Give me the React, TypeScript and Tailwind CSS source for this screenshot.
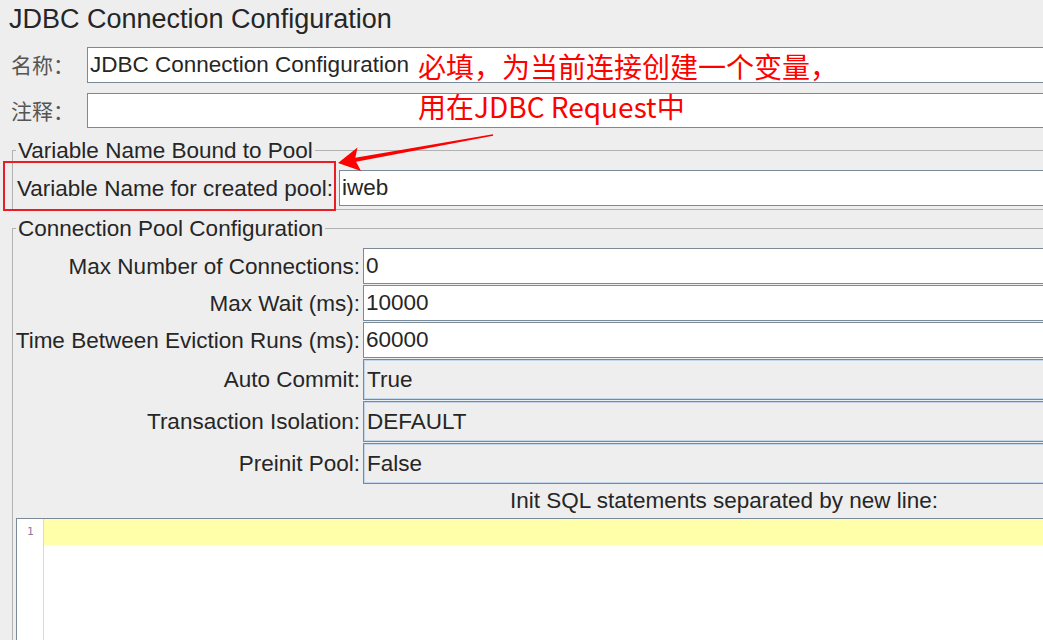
import type { ReactNode } from "react";

const sans = "font-['Liberation_Sans','Arial',sans-serif]";
const cjk = "font-['Noto_Sans_CJK_SC','Noto_Sans',sans-serif]";

function TextField({ value, className = "" }: { value?: string; className?: string }) {
  return (
    <div
      className={`flex flex-1 items-center border border-[#7b8a99] bg-white pl-[2px] text-[22.5px] text-[#262626] ${className}`}
    >
      {value}
    </div>
  );
}

function ComboField({ value }: { value: string }) {
  return (
    <div className="flex flex-1 items-center border border-[#7a8898] bg-[#eeeeee] pl-[3px] text-[22.5px] text-[#262626] shadow-[inset_0_0_0_1px_#c3d6ea]">
      {value}
    </div>
  );
}

function PoolRow({ label, children, tall }: { label: string; children: ReactNode; tall?: boolean }) {
  return (
    <div className={`flex ${tall ? "h-[41px]" : "h-[36px]"}`}>
      <div className="flex w-[350px] shrink-0 items-center justify-end whitespace-nowrap pr-[3px] pt-[1px] text-[22.5px] text-[#262626]">
        {label}
      </div>
      {children}
    </div>
  );
}

export default function App() {
  return (
    <div className={`relative h-[640px] w-[1043px] overflow-hidden bg-[#eeeeee] ${sans}`}>
      <div className="w-[1448px]">
        <div className="h-[47px] pl-[9px] pt-[3px] text-[27px] leading-[32px] text-[#262626]">
          JDBC Connection Configuration
        </div>

        <div className="flex h-[36px]">
          <div className={`flex w-[87px] shrink-0 items-center pl-[11px] text-[21px] text-[#555555] ${cjk}`}>
            名称：
          </div>
          <TextField value="JDBC Connection Configuration" />
        </div>

        <div className="mt-[10px] flex h-[35px]">
          <div className={`flex w-[87px] shrink-0 items-center pl-[11px] text-[21px] text-[#555555] ${cjk}`}>
            注释：
          </div>
          <TextField />
        </div>

        <fieldset className="mx-[12px] mt-[8px] min-w-0 border border-[#b2b2b2] pb-[3px]">
          <legend className="ml-[3px] px-[2px] pt-[2px] text-[22.5px] leading-[26px] text-[#262626]">
            Variable Name Bound to Pool
          </legend>
          <div className="mt-[6px] flex h-[36px]">
            <div className="flex w-[326px] shrink-0 items-center whitespace-nowrap pl-[4px] pt-[1px] text-[22.5px] text-[#262626]">
              Variable Name for created pool:
            </div>
            <TextField value="iweb" />
          </div>
        </fieldset>

        <fieldset className="mx-[12px] mt-[4px] min-w-0 border border-[#b2b2b2]">
          <legend className="ml-[3px] px-[2px] pt-[2px] text-[22.5px] leading-[26px] text-[#262626]">
            Connection Pool Configuration
          </legend>
          <div className="mt-[6px] flex flex-col gap-[1px]">
            <PoolRow label="Max Number of Connections:">
              <TextField value="0" />
            </PoolRow>
            <PoolRow label="Max Wait (ms):">
              <TextField value="10000" />
            </PoolRow>
            <PoolRow label="Time Between Eviction Runs (ms):">
              <TextField value="60000" />
            </PoolRow>
            <PoolRow label="Auto Commit:" tall>
              <ComboField value="True" />
            </PoolRow>
            <PoolRow label="Transaction Isolation:" tall>
              <ComboField value="DEFAULT" />
            </PoolRow>
            <PoolRow label="Preinit Pool:" tall>
              <ComboField value="False" />
            </PoolRow>
          </div>

          <div className="h-[34px] pt-[4px] text-center text-[22.5px] leading-[26px] text-[#262626]">
            Init SQL statements separated by new line:
          </div>

          <div className="ml-[3px] flex h-[200px] border border-[#7b8a99] bg-white">
            <div className="w-[27px] shrink-0 border-r border-[#d9d9d9]">
              <div className="h-[26px] pl-[10px] font-['DejaVu_Sans_Mono',monospace] text-[11px] leading-[26px] text-[#8a7a9e]">
                1
              </div>
            </div>
            <div className="flex-1">
              <div className="h-[26px] bg-[#ffffaa]" />
            </div>
          </div>
        </fieldset>
      </div>

      {/* annotation overlay */}
      <div className={`pointer-events-none absolute left-[418px] top-[46px] text-[28px] leading-[40px] text-[#ff0000] ${cjk}`}>
        <div>必填，为当前连接创建一个变量，</div>
        <div>用在JDBC Request中</div>
      </div>
      <div className="pointer-events-none absolute left-[3px] top-[161px] h-[50px] w-[333px] border-[2.5px] border-[#ea1d24]" />
      <svg
        className="pointer-events-none absolute left-0 top-0"
        width="1043"
        height="640"
        viewBox="0 0 1043 640"
      >
        <polygon
          points="338,163 357.5,147.5 355.3,157.8 492.9,134.2 493.1,135.8 356.1,161.8 361,171"
          fill="#ff0000"
        />
      </svg>
    </div>
  );
}
